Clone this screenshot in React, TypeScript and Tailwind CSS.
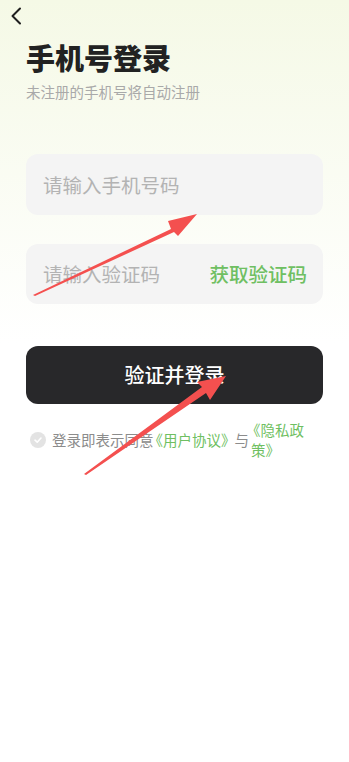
import React, { useState } from 'react';

const font = { fontFamily: '"Noto Sans CJK SC", "Noto Sans", sans-serif' };

const App: React.FC = () => {
  const [phone, setPhone] = useState('');
  const [code, setCode] = useState('');

  return (
    <div
      className="relative min-h-[762px] w-full bg-gradient-to-b from-[#f5f9e6] via-white via-45% to-white"
      style={font}
    >
      {/* Back */}
      <div className="h-[32px] pl-[9px] pt-[7px]">
        <svg width="16" height="18" viewBox="0 0 16 18" fill="none">
          <path d="M11 1.5 L3.5 9 L11 16.5" stroke="#1f1f1f" strokeWidth="2" strokeLinecap="round" strokeLinejoin="round" />
        </svg>
      </div>

      <div className="px-[26px]">
        <h1 className="mt-[7px] text-[29px] font-black leading-[36px] text-[#222]">手机号登录</h1>
        <p className="mt-[7px] text-[14.5px] leading-[20px] text-[#a9a9a9]">未注册的手机号将自动注册</p>

        {/* Phone */}
        <div className="mt-[52px] flex h-[61px] items-center rounded-[12px] bg-[#f4f4f4] px-[17px]">
          <input
            value={phone}
            onChange={(e) => setPhone(e.target.value)}
            placeholder="请输入手机号码"
            className="w-full bg-transparent text-[19.5px] text-[#333] outline-none placeholder:text-[#b3b3b3]"
            style={font}
          />
        </div>

        {/* Code */}
        <div className="mt-[29px] flex h-[60px] items-center rounded-[12px] bg-[#f4f4f4] pl-[17px] pr-[16px]">
          <input
            value={code}
            onChange={(e) => setCode(e.target.value)}
            placeholder="请输入验证码"
            className="min-w-0 flex-1 bg-transparent text-[19.5px] text-[#333] outline-none placeholder:text-[#b3b3b3]"
            style={font}
          />
          <button className="shrink-0 text-[19.5px] font-medium text-[#6fbf62]" style={font}>
            获取验证码
          </button>
        </div>

        {/* Submit */}
        <button
          className="mt-[42px] flex h-[58px] w-full items-center justify-center rounded-[12px] bg-[#28282a] text-[20px] font-medium text-white"
          style={font}
        >
          验证并登录
        </button>

        {/* Agreement */}
        <div className="mt-[16px] flex items-center pl-[4px] pr-[12px] text-[14.5px] leading-[20px] text-[#8c8c8c]">
          <div className="mr-[6px] flex h-[16px] w-[16px] shrink-0 items-center justify-center rounded-full bg-[#e3e3e3]">
            <svg width="10" height="10" viewBox="0 0 10 10" fill="none">
              <path d="M2 5.2 L4.2 7.2 L8 3" stroke="white" strokeWidth="1.6" strokeLinecap="round" strokeLinejoin="round" />
            </svg>
          </div>
          <span className="shrink-0 whitespace-nowrap">登录即表示同意</span>
          <span className="flex shrink-0 whitespace-nowrap text-[#6fbf62]">
            <span className="-ml-[5px]">《</span>
            <span>用户协议</span>
            <span className="-mr-[5px]">》</span>
          </span>
          <span className="shrink-0 whitespace-nowrap pl-[4px] pr-[2px]">与</span>
          <span className="min-w-0 text-[#6fbf62]">
            <span className="-ml-[5px]">《</span>隐私政策<span className="-mr-[5px]">》</span>
          </span>
        </div>
      </div>

      {/* Annotation arrows */}
      <svg className="pointer-events-none absolute left-0 top-0" width="349" height="762" viewBox="0 0 349 762">
        <polygon points="33,295 171,229 168,221 197,214 178,236 174,232 35,296" fill="#f4504f" />
        <polygon points="84,474 202,387 197,382 226,376 210,400 206,393 86,475" fill="#f4504f" />
      </svg>
    </div>
  );
};

export default App;
